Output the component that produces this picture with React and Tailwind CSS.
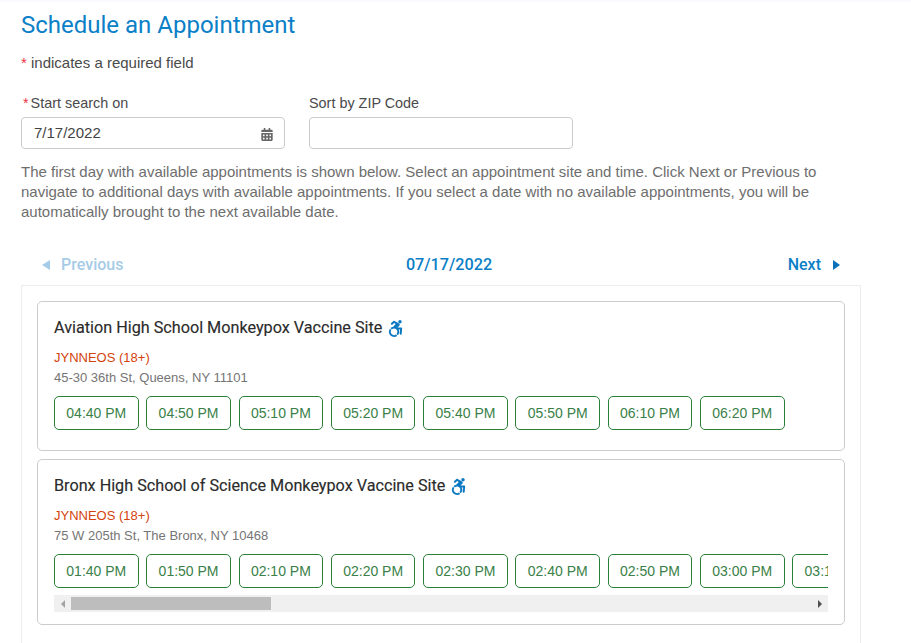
import { FaAccessibleIcon, FaCalendarAlt } from 'react-icons/fa';

const sites = [
  {
    name: 'Aviation High School Monkeypox Vaccine Site',
    address: '45-30 36th St, Queens, NY 11101',
    times: ['04:40 PM', '04:50 PM', '05:10 PM', '05:20 PM', '05:40 PM', '05:50 PM', '06:10 PM', '06:20 PM'],
  },
  {
    name: 'Bronx High School of Science Monkeypox Vaccine Site',
    address: '75 W 205th St, The Bronx, NY 10468',
    times: ['01:40 PM', '01:50 PM', '02:10 PM', '02:20 PM', '02:30 PM', '02:40 PM', '02:50 PM', '03:00 PM', '03:10 PM'],
    scroll: true,
  },
];

function SiteCard({ site }) {
  return (
    <div className={`border border-[#cccccc] rounded-[5px] bg-white pl-4 pr-4 pt-[16px] ${site.scroll ? 'h-[166px]' : 'h-[150px]'}`}>
      <div className="flex items-center gap-[6px] h-[20px] text-[16.2px] font-['Roboto',sans-serif] text-[#2b2b2b] leading-5 [-webkit-text-stroke:0.15px_#2b2b2b]">
        {site.name}
        <FaAccessibleIcon className="w-[15px] h-[17px] text-[#0b78c2]" />
      </div>
      <div className="mt-[10px] text-[13px] leading-[20px] text-[#d4430e]">JYNNEOS (18+)</div>
      <div className="text-[13px] leading-[20px] text-[#757575]">{site.address}</div>
      <div className="mt-[8px] flex gap-[7.7px] overflow-hidden">
        {site.times.map((t) => (
          <button
            key={t}
            className="shrink-0 w-[84.6px] h-[34px] border border-[#2a8038] rounded-[5px] text-[14px] text-[#3a8048] bg-white"
          >
            {t}
          </button>
        ))}
      </div>
      {site.scroll && (
        <div className="mt-[7px] h-[17px] bg-[#f0f0f0] flex items-center justify-between">
          <div className="flex items-center h-full">
            <div className="w-[17px] flex justify-center">
              <div className="border-y-[4px] border-y-transparent border-r-[4px] border-r-[#a3a3a3]" />
            </div>
            <div className="w-[200px] h-[13px] bg-[#bdbdbd]" />
          </div>
          <div className="w-[17px] flex justify-center">
            <div className="border-y-[4px] border-y-transparent border-l-[4px] border-l-[#505050]" />
          </div>
        </div>
      )}
    </div>
  );
}

export default function App() {
  return (
    <div className="w-[911px] h-[643px] overflow-hidden bg-white font-['Liberation_Sans',sans-serif]">
      <div className="h-[2px] bg-[#f8fafd]" />
      <div className="pl-[21px]">
        <h1 className="pt-[8px] font-['Roboto',sans-serif] text-[24px] leading-[30px] text-[#0b7fc7]">Schedule an Appointment</h1>
        <p className="mt-[13px] text-[15px] leading-[20px] text-[#4a4a4a]">
          <span className="text-[#ec2f45]">*</span> indicates a required field
        </p>

        <div className="mt-[20px] flex gap-6">
          <div className="w-[264px]">
            <label className="block pl-[2px] text-[14.4px] leading-[20px] text-[#4a4a4a]">
              <span className="text-[#ec2f45] pr-[2px]">*</span>Start search on
            </label>
            <div className="mt-[4px] h-[32px] border border-[#cccccc] rounded-[4px] flex items-center justify-between pl-3 pr-[11px] text-[15px] text-[#444444]">
              7/17/2022
              <FaCalendarAlt className="w-[12px] h-[13px] text-[#666666] mt-[2px]" />
            </div>
          </div>
          <div className="w-[264px]">
            <label className="block text-[14.4px] leading-[20px] text-[#4a4a4a]">Sort by ZIP Code</label>
            <div className="mt-[4px] h-[32px] border border-[#cccccc] rounded-[4px]" />
          </div>
        </div>

        <p className="mt-[13px] w-[820px] text-[15px] leading-[20px] text-[#6e6e6e]">
          The first day with available appointments is shown below. Select an appointment site and time. Click Next or Previous to navigate to additional days with available appointments. If you select a date with no available appointments, you will be automatically brought to the next available date.
        </p>

        <div className="mt-[32px] w-[840px] h-[31px] pb-[10px] pl-[21px] pr-[21px] flex items-center justify-between font-['Roboto',sans-serif] text-[16px] font-medium">
          <div className="flex items-center gap-[11px] text-[#a6cbe6] w-[110px]">
            <div className="border-y-[5px] border-y-transparent border-r-[8px] border-r-[#a6cbe6]" />
            Previous
          </div>
          <div className="text-[#0b7fc7] pt-[2px] pl-[16px] text-[16.2px]">07/17/2022</div>
          <div className="flex items-center justify-end gap-[12px] text-[#0b7fc7] w-[110px]">
            Next
            <div className="border-y-[5px] border-y-transparent border-l-[7px] border-l-[#0b70b8]" />
          </div>
        </div>

        <div className="w-[840px] h-[400px] border border-[#ececec] px-[15px] pt-[15px] flex flex-col gap-[8px]">
          {sites.map((site) => (
            <SiteCard key={site.name} site={site} />
          ))}
        </div>
      </div>
    </div>
  );
}
